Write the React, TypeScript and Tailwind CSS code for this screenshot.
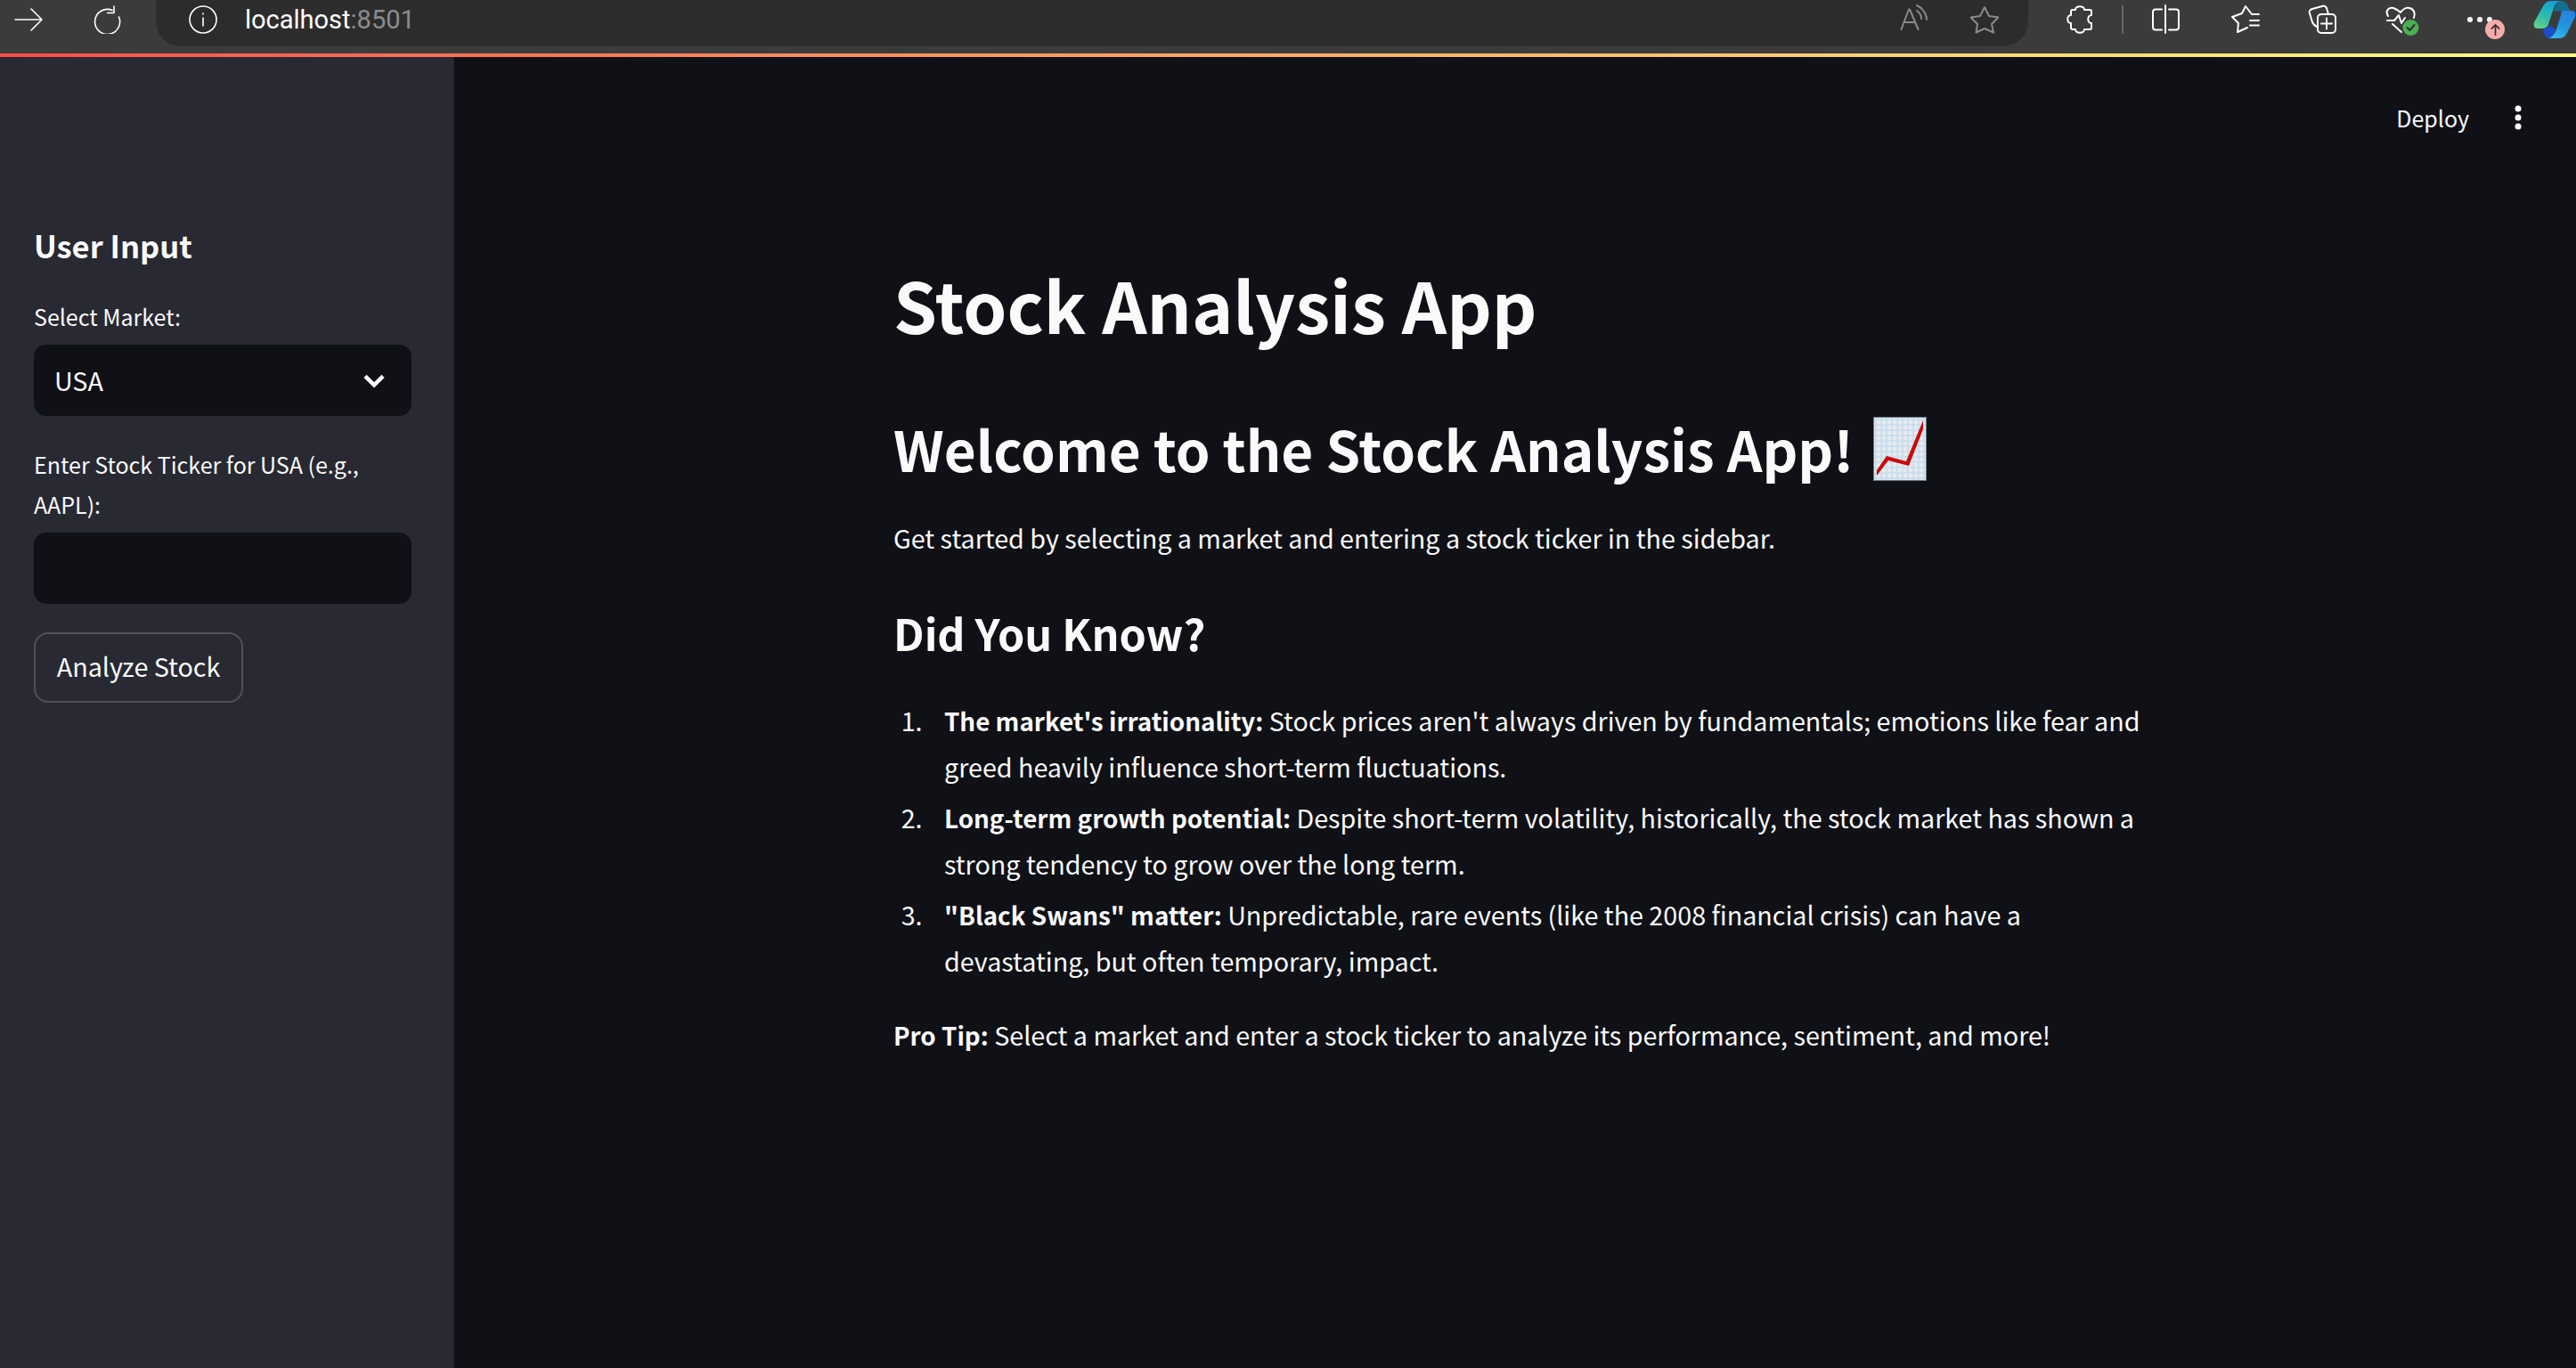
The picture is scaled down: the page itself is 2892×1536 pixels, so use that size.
const FONT = "font-['Noto_Sans_CJK_SC','Noto_Sans',sans-serif]"

function BrowserIcon({ children, box = '0 0 32 32', size = 'w-8 h-8', dim, weight = 1.6 }: {
  children: React.ReactNode
  box?: string
  size?: string
  dim?: boolean
  weight?: number
}) {
  return (
    <svg
      viewBox={box}
      className={`${size} ${dim ? 'text-[#8a8a8a]' : 'text-white'}`}
      fill="none"
      stroke="currentColor"
      strokeWidth={weight}
      strokeLinecap="round"
      strokeLinejoin="round"
    >
      {children}
    </svg>
  )
}

function Slot({ width, children }: { width: string; children?: React.ReactNode }) {
  return <div className={`${width} h-full flex items-center justify-center shrink-0`}>{children}</div>
}

function CopilotLogo() {
  return (
    <svg viewBox="0 0 48 44" className="w-[48px] h-[44px] ml-auto shrink-0">
      <defs>
        <linearGradient id="cpA" x1="0.7" y1="0" x2="0.2" y2="1">
          <stop offset="0" stopColor="#12a0d8" />
          <stop offset="0.55" stopColor="#2cbcae" />
          <stop offset="1" stopColor="#62d08c" />
        </linearGradient>
        <linearGradient id="cpB" x1="0.8" y1="0" x2="0.3" y2="1">
          <stop offset="0" stopColor="#2a7fd8" />
          <stop offset="0.6" stopColor="#2098e0" />
          <stop offset="1" stopColor="#38b6e8" />
        </linearGradient>
      </defs>
      <path d="M31 1C36 1 39 4 41 12H33C29 12 26 13 23 13C25 6 27 2 31 1Z" fill="#136f90" />
      <path d="M11 32C15 32 17 31 18 28L25 33C23 40 20 43 17 43C14 43 12 39 11 32Z" fill="#1b4fc8" />
      <path d="M20 1H31C26 2 24 6 22 12L17 27C16 31 13 32 9 32H5C1 32 0 29 1 25L11 7C13 3 16 1 20 1Z" fill="url(#cpA)" />
      <path d="M33 12H43C47 12 48 15 47 19L38 37C36 41 33 43 29 43H17C21 42 24 38 26 33L31 17C31 14 32 12 33 12Z" fill="url(#cpB)" />
    </svg>
  )
}

function BrowserBar() {
  return (
    <div className="h-[60px] bg-[#3b3b3b] flex items-start shrink-0 overflow-hidden">
      <div className="w-[175px] h-[44px] flex items-center pl-4 gap-[56px] shrink-0">
        <BrowserIcon>
          <path d="M1 16h30M19 4l12 12-12 12" />
        </BrowserIcon>
        <BrowserIcon>
          <path d="M22 5.500A14 14 0 1 0 29.500 13M24 1v7.500h-7.500" />
        </BrowserIcon>
      </div>
      <div className="w-[2102px] h-[52px] pb-2 bg-[#2c2c2c] rounded-b-[28px] flex items-center justify-between shrink-0">
        <div className="flex items-center pl-[37px]">
          <BrowserIcon>
            <circle cx="16" cy="16" r="15" />
            <path d="M16 14v9M16 9v1" />
          </BrowserIcon>
          <span className="ml-[31px] font-['Roboto',sans-serif] text-[29px] leading-[44px] text-white">
            localhost<span className="text-[#8c8c8c]">:8501</span>
          </span>
        </div>
        <div className="flex items-center pr-[33px] gap-[47px]">
          <BrowserIcon dim box="13 4 32 36" size="w-[32px] h-[36px]" weight={2}>
            <path d="M14.500 33 23 10.500h1L33.500 33M17.500 25H30M32 12c3 2 5 5 5 9M32 6c6 3 11 9 11 16" />
          </BrowserIcon>
          <BrowserIcon dim box="92 6 32 32" weight={2}>
            <path d="M108 8l5 10 10.500 1.500L116 27l2 9.500-10-4.500-9.500 4.500L100 27l-7.500-7.500L103 18z" />
          </BrowserIcon>
        </div>
      </div>
      <div className="h-[44px] flex items-center ml-[14px]">
        <Slot width="w-[88px]">
          <BrowserIcon box="18 4 34 36" size="w-[34px] h-[36px]" weight={2}>
            <path d="M30 11C30 6 40 6 40 11H46C47 11 48 12 48 13V17C43 17 43 26 48 26V31C48 32 47 33 46 33H40C40 38 30 38 30 33H27C26 33 25 32 25 31V26C20 26 20 17 25 17V13C25 12 26 11 27 11Z" />
          </BrowserIcon>
        </Slot>
        <Slot width="w-[8px]">
          <div className="w-[2px] h-[32px] bg-[#666666]" />
        </Slot>
        <Slot width="w-[88px]">
          <BrowserIcon box="112 4 38 36" size="w-[38px] h-[36px]" weight={2}>
            <path d="M127 10.500H120a3 3 0 0 0-3 3v17a3 3 0 0 0 3 3h7M135 10.500h8a3 3 0 0 1 3 3v17a3 3 0 0 1-3 3h-8M131 6v31" />
          </BrowserIcon>
        </Slot>
        <div className="w-px" />
        <Slot width="w-[88px]">
          <BrowserIcon box="200 4 38 36" size="w-[38px] h-[36px]" weight={2}>
            <path d="M227 16l-7-9-4 8-11 4 7 7-1 10 11-5M227 16h8M225 23h10M225 28.500h10" />
          </BrowserIcon>
        </Slot>
        <Slot width="w-[88px]">
          <BrowserIcon box="0 4 38 36" size="w-[38px] h-[36px]" weight={2}>
            <path d="M25 16l-2-7c-1-2-3-3-5-2L7 10c-3 1-4 3-3 5l3 10c1 2 3 4 5 5" />
            <rect x="13" y="16" width="20" height="21" rx="4" />
            <path d="M23 20.500v12M17 26.500h12" />
          </BrowserIcon>
        </Slot>
        <Slot width="w-[88px]">
          <BrowserIcon box="86 4 42 36" size="w-[42px] h-[36px]" weight={2}>
            <path d="M92 18C88 11 94 8 98 9c3 1 6 3 8 5 2-3 6-6 10-5 5 1 7 6 5 11M91 23h8l5-6 3 9 4-6M97 27l10 9" />
            <circle cx="117.500" cy="31" r="9" fill="#4caf50" stroke="none" />
            <path d="M113.500 31l3 3 5-6" stroke="#263238" />
          </BrowserIcon>
        </Slot>
        <div className="w-[86px] h-full relative shrink-0">
          <div className="absolute left-[30px] top-[19px] flex gap-[5px]">
            <div className="w-[6px] h-[6px] rounded-full bg-white" />
            <div className="w-[6px] h-[6px] rounded-full bg-white" />
            <div className="w-[6px] h-[6px] rounded-full bg-white" />
          </div>
          <div className="absolute left-[50px] top-[22px] w-[22px] h-[22px] rounded-full bg-[#f4adab] flex items-center justify-center">
            <svg viewBox="0 0 16 16" className="w-[15px] h-[15px]" fill="none" stroke="#3a2a2a" strokeWidth="1.800">
              <path d="M8 15V2M3 7l5-5 5 5" />
            </svg>
          </div>
        </div>
      </div>
      <CopilotLogo />
    </div>
  )
}

function Field({ children }: { children?: React.ReactNode }) {
  return (
    <div className="w-full h-[80px] bg-[#0f1116] rounded-[14px] flex items-center justify-between pl-[23px] pr-6">
      {children}
    </div>
  )
}

function Sidebar() {
  return (
    <aside className="w-[510px] shrink-0 bg-[#282932] border-r border-[#22232b] pt-[186px] pl-[38px] pr-[47px] text-[#fafafa]">
      <h2 className="text-[34.5px] font-bold leading-[50px]">User Input</h2>
      <label className="block text-[25px] leading-[45px] mt-[33px] mb-[9px]">Select Market:</label>
      <Field>
        <span className="text-[28.7px] leading-[40px]">USA</span>
        <svg viewBox="0 0 24 24" className="w-8 h-8 mr-[2px]" fill="none" stroke="#fafafa" strokeWidth="3.400">
          <path d="M4.500 8.500 12 16l7.500-7.500" />
        </svg>
      </Field>
      <label className="block text-[25px] leading-[45px] mt-[32px] mb-[9px]">
        Enter Stock Ticker for USA (e.g., AAPL):
      </label>
      <Field />
      <button className="block mt-[32px] h-[79px] pb-[4px] w-[235px] rounded-[16px] border-2 border-[#50515b] text-[28.7px] leading-[40px] text-[#fafafa] text-center">
        Analyze Stock
      </button>
    </aside>
  )
}

function ChartEmoji() {
  return (
    <svg viewBox="0 0 60 72" className="w-[60px] h-[72px] inline-block align-[-10px] ml-[22px]">
      <defs>
        <pattern id="grid" width="6" height="6" patternUnits="userSpaceOnUse">
          <rect width="6" height="6" fill="#e6eaee" />
          <path d="M0 3h6M3 0v6" stroke="#c5dcee" strokeWidth="1.500" />
        </pattern>
      </defs>
      <rect x="0.500" y="0.500" width="59" height="71" fill="url(#grid)" stroke="#6c7480" />
      <path d="M4 66 V60 L15 44 L37 50 L56 4 V14 L40 55 L17 49z" fill="#c80a0a" />
    </svg>
  )
}

const facts = [
  {
    title: "The market's irrationality:",
    body: " Stock prices aren't always driven by fundamentals; emotions like fear and greed heavily influence short-term fluctuations.",
  },
  {
    title: 'Long-term growth potential:',
    body: ' Despite short-term volatility, historically, the stock market has shown a strong tendency to grow over the long term.',
  },
  {
    title: '"Black Swans" matter:',
    body: ' Unpredictable, rare events (like the 2008 financial crisis) can have a devastating, but often temporary, impact.',
  },
]

export default function App() {
  return (
    <div className={`${FONT} w-[2892px] h-[1536px] bg-[#0f1116] flex flex-col overflow-hidden`}>
      <BrowserBar />
      <div className="h-1 shrink-0 bg-gradient-to-r from-[#ff4b4b] to-[#fffd80]" />
      <div className="flex-1 flex min-h-0">
        <Sidebar />
        <main className="flex-1 relative text-[#fafafa]">
          <div className="absolute top-[43px] right-[60px] flex items-center gap-[50px]">
            <span className="text-[25px] leading-[50px]">Deploy</span>
            <svg viewBox="0 0 10 28" className="w-[10px] h-[28px]" fill="white">
              <circle cx="5" cy="4" r="3.500" />
              <circle cx="5" cy="14" r="3.500" />
              <circle cx="5" cy="24" r="3.500" />
            </svg>
          </div>
          <div className="ml-[493px] w-[1404px] pt-[216px]">
            <h1 className="text-[78.6px] font-bold leading-[122px]">Stock Analysis App</h1>
            <h2 className="mt-[58px] h-[86px] text-[62px] font-bold leading-[86px] whitespace-nowrap">
              Welcome to the Stock Analysis App!
              <ChartEmoji />
            </h2>
            <p className="mt-[32px] text-[28.7px] leading-[51px]">
              Get started by selecting a market and entering a stock ticker in the sidebar.
            </p>
            <h3 className="mt-[46px] text-[48.5px] font-bold leading-[70px]">Did You Know?</h3>
            <ol className="mt-[38px] list-decimal pl-[39px] text-[28.7px] leading-[51px]">
              {facts.map((fact) => (
                <li key={fact.title} className="mb-[6px] pl-[18px]">
                  <strong className="font-bold text-[27.8px]">{fact.title}</strong>
                  {fact.body}
                </li>
              ))}
            </ol>
            <p className="mt-[32px] text-[28.7px] leading-[51px]">
              <strong className="font-bold text-[27.8px]">Pro Tip:</strong> Select a market and enter a stock ticker to analyze its performance, sentiment, and more!
            </p>
          </div>
        </main>
      </div>
    </div>
  )
}
